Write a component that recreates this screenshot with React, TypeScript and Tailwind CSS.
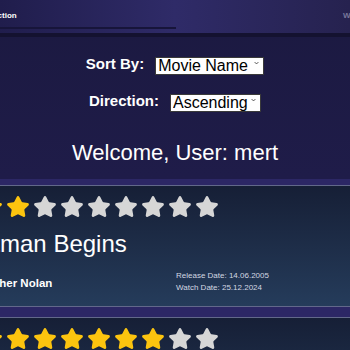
import { Star } from "lucide-react";

const movies = [
  {
    title: "Batman Begins",
    director: "Christopher Nolan",
    rating: 3,
    release: "14.06.2005",
    watched: "25.12.2024",
  },
  {
    title: "The Dark Knight",
    director: "Christopher Nolan",
    rating: 8,
    release: "18.07.2008",
    watched: "26.12.2024",
  },
];

function Stars({ rating }: { rating: number }) {
  return (
    <div className="flex gap-[3px]">
      {Array.from({ length: 10 }).map((_, i) => (
        <Star
          key={i}
          size={24}
          strokeWidth={1.8}
          color={i < rating ? "#fcc40f" : "#d6d6d6"}
          fill={i < rating ? "#fcc40f" : "#d6d6d6"}
          className="shrink-0"
        />
      ))}
    </div>
  );
}

function MovieCard({ movie }: { movie: (typeof movies)[number] }) {
  return (
    <div className="w-full shrink-0 border-y border-[#62688a] bg-gradient-to-b from-[#161f36] to-[#253c5b] pt-[9px] pb-[12px]">
      <div className="-ml-[48px] w-[420px]">
        <Stars rating={movie.rating} />
        <h2 className="mt-[11px] pl-[12px] text-[24px] leading-[28px] text-white">
          {movie.title}
        </h2>
        <div className="mt-[12px] flex items-center">
          <div className="w-[224px] pt-[4px] text-[11.5px] font-bold text-white">
            {movie.director}
          </div>
          <div className="text-[8px] leading-[12px] text-[#d3d7e2]">
            <div>Release Date: {movie.release}</div>
            <div>Watch Date: {movie.watched}</div>
          </div>
        </div>
      </div>
    </div>
  );
}

function SortSelect({
  value,
  options,
  width,
}: {
  value: string;
  options: string[];
  width: string;
}) {
  return (
    <div className={`relative h-[18px] ${width}`}>
      <select
        defaultValue={value}
        className="h-[18px] w-full appearance-none border border-[#3a3a3a] bg-white pl-[2px] text-[16px] leading-[16px] text-black outline-none"
      >
        {options.map((o) => (
          <option key={o}>{o}</option>
        ))}
      </select>
      {/* chevron */}
      <svg
        viewBox="0 0 8 6"
        className="pointer-events-none absolute right-[5px] top-[7px] h-[4px] w-[5px]"
      >
        <path d="M1 1.5 L4 4.5 L7 1.5" fill="none" stroke="#333" strokeWidth="1.3" />
      </svg>
    </div>
  );
}

export default function App() {
  return (
    <div className="h-[350px] w-[350px] overflow-hidden bg-gradient-to-b from-[#1b1940] to-[#231f52] font-[Liberation_Sans,Arial,sans-serif]">
      {/* Header tabs */}
      <div className="h-[33px] bg-gradient-to-r from-[#201d4c] via-[#2f2b68] to-[#26224f]">
        <div className="flex h-full">
          <div className="flex w-[176px] shrink-0 flex-col">
            <div className="-ml-[22px] pt-[11px] text-[8px] font-bold leading-[10px] text-white">
              Collection
            </div>
            <div className="mt-[6px] h-[2px] bg-[#17153a]" />
          </div>
          <div className="ml-[167px] pt-[11px] text-[8px] font-bold leading-[10px] text-[#77769a] whitespace-nowrap">
            Watchlist
          </div>
        </div>
      </div>
      <div className="h-[4px] bg-[#141230]" />

      {/* Sort controls */}
      <div className="flex flex-col items-center pt-[15px]">
        <div className="flex h-[22px] items-center gap-[11px]">
          <span className="pt-[2px] text-[15px] font-bold leading-[18px] text-white">Sort By:</span>
          <SortSelect
            value="Movie Name"
            options={["Movie Name", "Rating", "Release Date", "Watch Date"]}
            width="w-[109px]"
          />
        </div>
        <div className="mt-[15px] flex h-[22px] items-center gap-[11px]">
          <span className="pt-[2px] text-[15px] font-bold leading-[18px] text-white">Direction:</span>
          <SortSelect
            value="Ascending"
            options={["Ascending", "Descending"]}
            width="w-[91px]"
          />
        </div>
        <h1 className="mt-[29px] text-[22px] leading-[26px] text-white">
          Welcome, User: mert
        </h1>
      </div>

      {/* Movie list */}
      <div className="mt-[13px] flex flex-col gap-[10px] bg-[#2c2765] pt-[6px]">
        {movies.map((m) => (
          <MovieCard key={m.title} movie={m} />
        ))}
      </div>
    </div>
  );
}
